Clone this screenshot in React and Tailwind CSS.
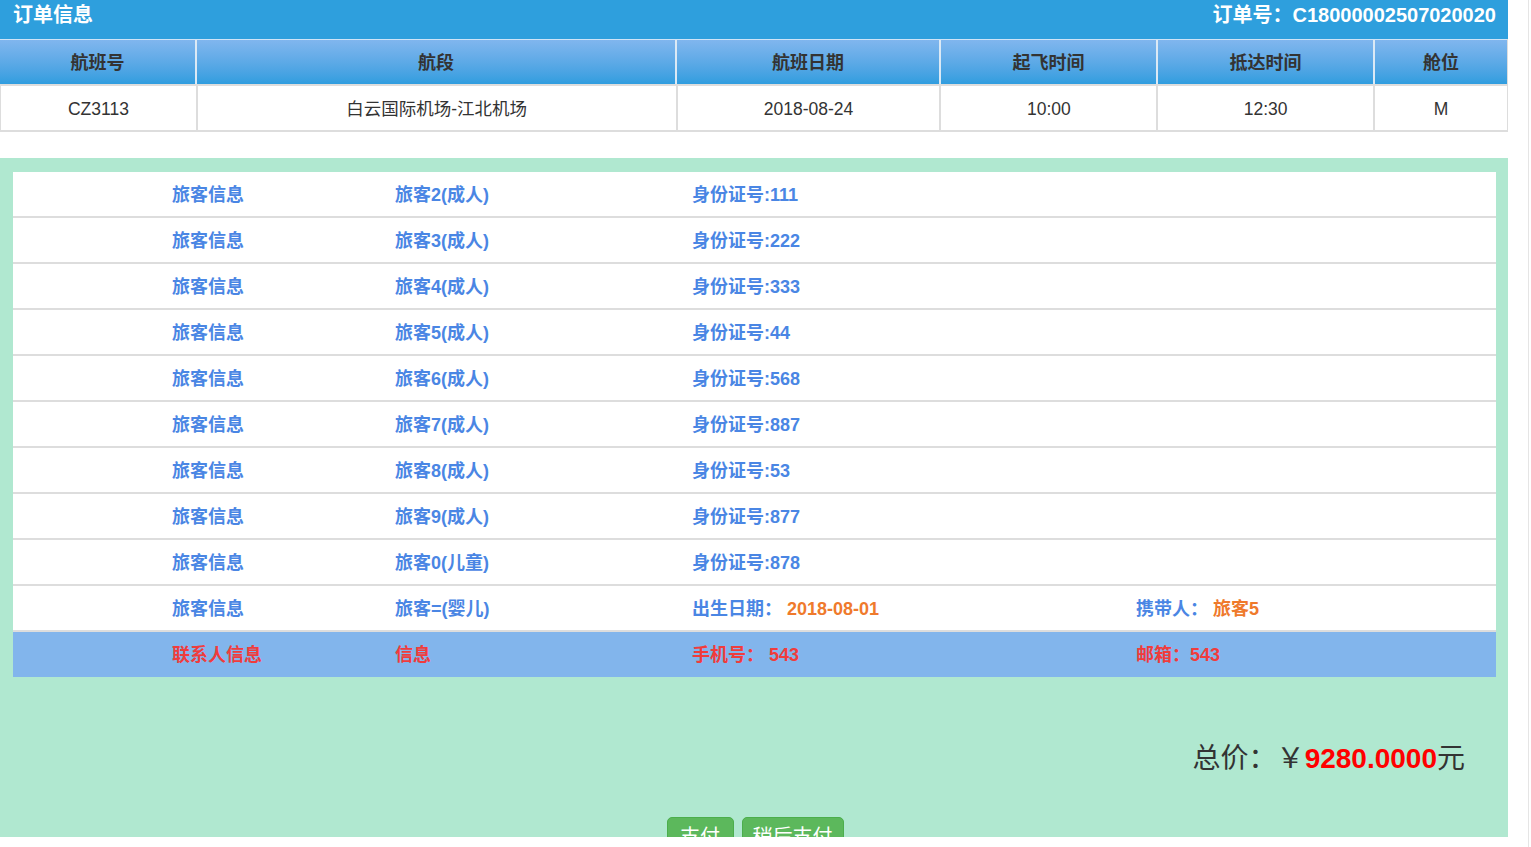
import React from "react";

const passengers = [
  ["旅客2(成人)", "身份证号:111"],
  ["旅客3(成人)", "身份证号:222"],
  ["旅客4(成人)", "身份证号:333"],
  ["旅客5(成人)", "身份证号:44"],
  ["旅客6(成人)", "身份证号:568"],
  ["旅客7(成人)", "身份证号:887"],
  ["旅客8(成人)", "身份证号:53"],
  ["旅客9(成人)", "身份证号:877"],
  ["旅客0(儿童)", "身份证号:878"],
];

const font = { fontFamily: '"Liberation Sans", "Noto Sans CJK SC", Arial, sans-serif' };

export default function App() {
  const heads = ["航班号", "航段", "航班日期", "起飞时间", "抵达时间", "舱位"];
  const vals = ["CZ3113", "白云国际机场-江北机场", "2018-08-24", "10:00", "12:30", "M"];
  const widths = ["w-[195px]", "w-[480px]", "w-[264px]", "w-[217px]", "w-[217px]", "w-[134px]"];
  return (
    <div className="flex w-[1531px] h-[847px] bg-white overflow-hidden" style={font}>
      <div className="w-[1508px] h-[837px] overflow-hidden flex flex-col shrink-0">
        {/* header bar */}
        <div className="h-[39px] bg-[#2e9fdd] flex items-center justify-between pl-[13px] pr-[12px] text-white font-bold text-[20px] shrink-0">
          <span className="-mt-[10px]">订单信息</span>
          <span className="-mt-[10px]">订单号：C18000002507020020</span>
        </div>
        {/* flight table */}
        <div className="flex flex-col w-[1508px] border-r border-[#dddddd] shrink-0">
          <div className="flex h-[47px] border-t border-[#cfe4f7] border-b-2 border-b-[#dddddd] bg-gradient-to-b from-[#80b6ee] to-[#2f9ddf]">
            {heads.map((h, i) => (
              <div
                key={h}
                className={`${widths[i]} flex items-center justify-center pt-[2px] font-bold text-[18px] text-[#333333] ${i > 0 ? "border-l-2 border-[#dbe9f5]" : ""}`}
              >
                {h}
              </div>
            ))}
          </div>
          <div className="flex h-[46px] bg-white border-b-2 border-[#dddddd] border-l border-l-[#dddddd]">
            {vals.map((v, i) => (
              <div
                key={v}
                className={`${widths[i]} flex items-center justify-center pt-[2px] text-[17.5px] text-[#333333] ${i > 0 ? "border-l-2 border-[#dddddd]" : ""}`}
              >
                {v}
              </div>
            ))}
          </div>
        </div>
        <div className="h-[26px] shrink-0" />
        {/* green section */}
        <div className="bg-[#b0e8d0] flex-1 pt-[14px] pl-[13px] pr-[12px] flex flex-col">
          <div className="bg-white flex flex-col">
            {passengers.map(([n, id]) => (
              <div key={n} className="grid grid-cols-[159px_223px_297px_444px_1fr] h-[46px] items-center pt-[2px] border-b-2 border-[#dddddd] font-bold text-[18px] text-[#4a86e4]">
                <span />
                <span>旅客信息</span>
                <span>{n}</span>
                <span>{id}</span>
                <span />
              </div>
            ))}
            <div className="grid grid-cols-[159px_223px_297px_444px_1fr] h-[46px] items-center pt-[2px] border-b-2 border-[#dddddd] font-bold text-[18px] text-[#4a86e4]">
              <span />
              <span>旅客信息</span>
              <span>旅客=(婴儿)</span>
              <span>
                出生日期： <span className="text-[#ef7a2c]">2018-08-01</span>
              </span>
              <span>
                携带人： <span className="text-[#ef7a2c]">旅客5</span>
              </span>
            </div>
            <div className="grid grid-cols-[159px_223px_297px_444px_1fr] h-[45px] items-center pt-[2px] bg-[#82b5ec] font-bold text-[18px] text-[#f03c3c]">
              <span />
              <span>联系人信息</span>
              <span>信息</span>
              <span>手机号： 543</span>
              <span>邮箱：543</span>
            </div>
          </div>
          <div className="flex justify-end pr-[31px] mt-[68px]">
            <div className="text-[28px] text-[#333333] leading-none">
              总价：￥<span className="font-bold text-[#ff0000]">9280.0000</span>元
            </div>
          </div>
          <div className="flex justify-center gap-[8px] mt-[44px] pl-[1px]">
            <button className="w-[67px] h-[34px] bg-[#5cb85c] border border-[#4cae4c] rounded-[5px] text-white text-[20px] pt-[4px]">支付</button>
            <button className="w-[102px] h-[34px] bg-[#5cb85c] border border-[#4cae4c] rounded-[5px] text-white text-[20px] pt-[4px]">稍后支付</button>
          </div>
        </div>
      </div>
      <div className="w-[23px] h-[847px] flex justify-end shrink-0">
        <div className="w-[3px] h-full border-l border-[#e5e5e5]" />
      </div>
    </div>
  );
}
